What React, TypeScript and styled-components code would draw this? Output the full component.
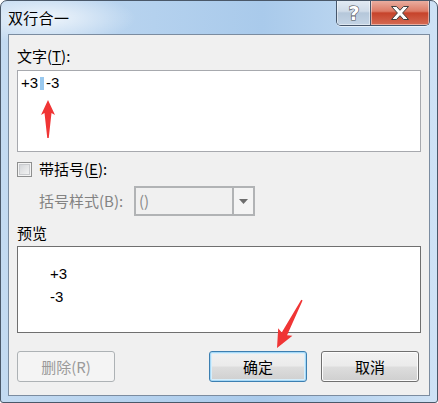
import React from "react";
import styled, { createGlobalStyle } from "styled-components";

const GlobalStyle = createGlobalStyle`
  html, body { margin: 0; padding: 0; background: #ffffff; }
  body { width: 438px; height: 403px; overflow: hidden; }
`;

const UI_FONT = `"Noto Sans CJK SC", "Noto Sans", sans-serif`;
const LATIN_FONT = `"Liberation Sans", "Noto Sans", sans-serif`;

const Window = styled.div`
  position: relative;
  box-sizing: border-box;
  width: 438px;
  height: 403px;
  border: 1px solid #4a5869;
  border-radius: 7px 7px 3px 3px;
  padding: 0 7px 6px;
  display: flex;
  flex-direction: column;
  background:
    radial-gradient(ellipse 90px 26px at 45px 17px, rgba(255, 255, 255, 0.75), rgba(255, 255, 255, 0) 100%),
    linear-gradient(to right, #c3daf1 0%, #b4d1ee 35%, #a9caeb 60%, #bfd8f1 85%, #cfe2f5 100%);
  font-family: ${UI_FONT};
  overflow: hidden;
`;

const TitleBar = styled.div`
  height: 33px;
  display: flex;
  align-items: center;
  font-size: 15px;
  color: #000;
  line-height: 20px;
  letter-spacing: 0.3px;
`;

const CaptionGroup = styled.div`
  position: absolute;
  top: -1px;
  right: 7px;
  display: flex;
  height: 25px;
  border: 1px solid #46566b;
  border-top: none;
  border-radius: 0 0 5px 5px;
  overflow: hidden;
  box-shadow: 0 1px 0 rgba(255, 255, 255, 0.6);
`;

const CaptionButton = styled.div<{ $kind: "help" | "close" }>`
  width: ${(p) => (p.$kind === "help" ? "33px" : "58px")};
  height: 100%;
  display: flex;
  align-items: center;
  justify-content: center;
  box-shadow: inset 0 0 0 1px rgba(255, 255, 255, 0.45);
  border-left: ${(p) => (p.$kind === "close" ? "1px solid #46566b" : "none")};
  background: ${(p) =>
    p.$kind === "help"
      ? "linear-gradient(#e3ebf4 0%, #cfdbe8 45%, #b5c7da 52%, #c4d4e5 100%)"
      : "linear-gradient(#eab2a5 0%, #dc7b66 45%, #c6432b 52%, #d56a53 100%)"};
`;

const Client = styled.div`
  flex: 1;
  box-sizing: border-box;
  background: #f0f0f0;
  border: 1px solid #7b8ca0;
  padding: 11px 8px 0 8px;
  display: flex;
  flex-direction: column;
`;

const Label = styled.div<{ $disabled?: boolean }>`
  height: 20px;
  line-height: 20px;
  font-size: 15px;
  color: ${(p) => (p.$disabled ? "#838383" : "#000")};
  white-space: nowrap;
`;

const U = styled.span`
  text-decoration: underline;
  text-underline-offset: 2px;
`;

const TextBox = styled.div`
  margin-top: 4px;
  box-sizing: border-box;
  height: 82px;
  background: #fff;
  border: 1px solid #a7a9ae;
  padding: 3px 3px;
  font-family: ${LATIN_FONT};
  font-size: 15px;
  line-height: 18px;
  color: #000;
  display: flex;
  align-items: flex-start;
`;

const Selected = styled.span`
  display: inline-block;
  width: 4px;
  height: 13px;
  margin: 3px 2px 0 2px;
  background: #99c9ef;
`;

const CheckRow = styled.div`
  margin-top: 6px;
  height: 22px;
  display: flex;
  align-items: center;
  gap: 7px;
`;

const CheckBox = styled.div`
  box-sizing: border-box;
  width: 15px;
  height: 15px;
  border: 1px solid #8e8f8f;
  background: linear-gradient(135deg, #cdd0d4 0%, #e6e7e8 55%, #f7f7f7 100%);
  box-shadow: inset 0 0 0 1px #f4f4f4, inset 0 0 0 2px #c9cbce;
`;

const SelectRow = styled.div`
  margin-top: 6px;
  height: 30px;
  display: flex;
  align-items: center;
  padding-left: 22px;
`;

const SelectLabel = styled(Label)`
  width: 95px;
`;

const Select = styled.div`
  box-sizing: border-box;
  width: 121px;
  height: 30px;
  border: 2px solid #b1b3b5;
  background: #f0f0f0;
  display: flex;
`;

const SelectValue = styled.div`
  flex: 1;
  padding-left: 3px;
  font-size: 15px;
  line-height: 26px;
  color: #8a8a8a;
`;

const DropButton = styled.div`
  width: 19px;
  border-left: 2px solid #b1b3b5;
  background: #f4f4f4;
  display: flex;
  align-items: center;
  justify-content: center;
`;

const PreviewLabel = styled(Label)`
  margin-top: 7px;
`;

const PreviewBox = styled.div`
  margin-top: 3px;
  box-sizing: border-box;
  height: 87px;
  background: #fff;
  border: 1px solid #6f6f6f;
  padding: 16px 0 0 32px;
  font-family: ${LATIN_FONT};
  font-size: 15px;
  line-height: 22.5px;
  color: #000;
`;

const ButtonRow = styled.div`
  margin-top: 18px;
  display: flex;
  align-items: center;
  padding-right: 2px;
`;

const Spacer = styled.div`
  flex: 1;
`;

const Button = styled.div<{ $variant?: "default" | "disabled" }>`
  box-sizing: border-box;
  width: 98px;
  height: 31px;
  display: flex;
  align-items: center;
  justify-content: center;
  font-size: 15px;
  border-radius: 3px;
  margin-left: ${(p) => (p.$variant === "default" ? "0" : "14px")};
  border: 1px solid
    ${(p) =>
      p.$variant === "default" ? "#3c7fb1" : p.$variant === "disabled" ? "#adb2b5" : "#707070"};
  color: ${(p) => (p.$variant === "disabled" ? "#9a9a9a" : "#000")};
  background: ${(p) =>
    p.$variant === "disabled"
      ? "#f4f4f4"
      : "linear-gradient(#f2f2f2 0%, #ebebeb 48%, #dddddd 52%, #cfcfcf 100%)"};
  box-shadow: ${(p) =>
    p.$variant === "default"
      ? "inset 0 0 0 1px #a6d8f6, inset 0 0 0 2px #d6eefb"
      : p.$variant === "disabled"
      ? "none"
      : "inset 0 0 0 1px #fcfcfc"};
  &:first-child {
    margin-left: 0;
  }
`;

const Overlay = styled.svg`
  position: absolute;
  left: 0;
  top: 0;
  pointer-events: none;
`;

function arrowPoints(L: number, h: number, w: number, s0: number, s1: number) {
  return [
    [0, 0],
    [w / 2, h],
    [s0 / 2, h - 2],
    [s1 / 2, L],
    [-s1 / 2, L],
    [-s0 / 2, h - 2],
    [-w / 2, h],
  ]
    .map((p) => p.join(","))
    .join(" ");
}

const HelpIcon = () => (
  <svg width="18" height="20" viewBox="0 0 18 20">
    <text
      x="9"
      y="17"
      textAnchor="middle"
      fontFamily='"DejaVu Sans", sans-serif'
      fontWeight="bold"
      fontSize="19"
      fill="#ffffff"
      stroke="#4b4f55"
      strokeWidth="1.2"
      paintOrder="stroke"
    >
      ?
    </text>
  </svg>
);

const CloseIcon = () => (
  <svg width="22" height="16" viewBox="0 0 22 16">
    <path
      d="M2.5 1.5 H7.5 L11 5.3 L14.5 1.5 H19.5 L13.6 8 L19.5 14.5 H14.5 L11 10.7 L7.5 14.5 H2.5 L8.4 8 Z"
      fill="#ffffff"
      stroke="#3d3d3d"
      strokeWidth="1"
      strokeLinejoin="round"
    />
  </svg>
);

export default function App() {
  return (
    <>
      <GlobalStyle />
      <Window>
        <TitleBar>双行合一</TitleBar>
        <CaptionGroup>
          <CaptionButton $kind="help">
            <HelpIcon />
          </CaptionButton>
          <CaptionButton $kind="close">
            <CloseIcon />
          </CaptionButton>
        </CaptionGroup>
        <Client>
          <Label>
            文字(<U>T</U>):
          </Label>
          <TextBox>
            <span>+3</span>
            <Selected />
            <span>-3</span>
          </TextBox>
          <CheckRow>
            <CheckBox />
            <Label>
              带括号(<U>E</U>):
            </Label>
          </CheckRow>
          <SelectRow>
            <SelectLabel $disabled>括号样式(B):</SelectLabel>
            <Select>
              <SelectValue>()</SelectValue>
              <DropButton>
                <svg width="9" height="5" viewBox="0 0 9 5">
                  <path d="M0 0 H9 L4.5 5 Z" fill="#6d6d6d" />
                </svg>
              </DropButton>
            </Select>
          </SelectRow>
          <PreviewLabel>预览</PreviewLabel>
          <PreviewBox>
            <div>+3</div>
            <div>-3</div>
          </PreviewBox>
          <ButtonRow>
            <Button $variant="disabled">删除(R)</Button>
            <Spacer />
            <Button $variant="default">确定</Button>
            <Button>取消</Button>
          </ButtonRow>
        </Client>
        <Overlay width="438" height="403" viewBox="0 0 438 403">
          <polygon
            transform="translate(47 99)"
            points={arrowPoints(38, 15, 14, 7, 1.5)}
            fill="#f03535"
          />
          <polygon
            transform="translate(276 347) rotate(207.5)"
            points={arrowPoints(54, 18, 16, 6, 1.5)}
            fill="#f03535"
          />
        </Overlay>
      </Window>
    </>
  );
}
